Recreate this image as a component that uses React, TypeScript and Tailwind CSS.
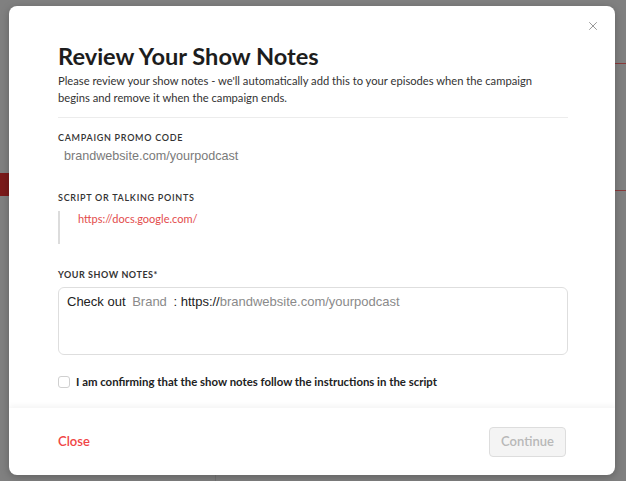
import { X } from "lucide-react";

export default function App() {
  return (
    <div className="relative flex h-[481px] w-[626px] items-start overflow-hidden bg-[#808080] pl-[9px] pt-[6px] font-['Lato',sans-serif]">
      {/* page behind the overlay */}
      <div className="absolute left-0 top-[173px] h-[23px] w-[9px] bg-[#7b1a1a]" />
      <div className="absolute right-0 top-[63px] h-px w-[11px] bg-[#8a3a3a]" />
      <div className="absolute right-0 top-[190px] h-px w-[11px] bg-[#8a3a3a]" />
      <div className="absolute bottom-0 left-[215px] h-[6px] w-px bg-[#747474]" />

      {/* Modal */}
      <div className="relative flex h-[469px] w-[606px] flex-col overflow-hidden rounded-lg bg-white shadow-[0_2px_8px_rgba(0,0,0,0.25)]">
        <button className="absolute right-[15px] top-[13px] text-[#8a8a8a]">
          <X className="h-[14px] w-[14px]" strokeWidth={1.5} />
        </button>

        <div className="flex-1 px-[49px] pt-[35px]">
          <h1 className="text-[23.6px] font-bold leading-[30px] text-[#1d1d1d]">
            Review Your Show Notes
          </h1>
          <p className="mt-[1px] text-[11.2px] leading-[17px] text-[#333]">
            Please review your show notes - we'll automatically add this to your episodes when the campaign
            begins and remove it when the campaign ends.
          </p>
          <div className="mr-[-2px] mt-[11px] h-px bg-[#ececec]" />

          <div className="mt-[14px] text-[9px] font-semibold uppercase leading-[12px] tracking-[0.08em] text-[#333]">
            Campaign Promo Code
          </div>
          <div className="mt-[4px] pl-[6px] font-['Liberation_Sans',sans-serif] text-[12.6px] leading-[16px] text-[#7a7a7a]">
            brandwebsite.com/yourpodcast
          </div>

          <div className="mt-[28px] text-[9px] font-semibold uppercase leading-[12px] tracking-[0.08em] text-[#333]">
            Script or Talking Points
          </div>
          <div className="mt-[7px] h-[33px] border-l-2 border-[#dcdcdc] pl-[18px] pt-[1px] text-[11px] leading-[14px] text-[#e34b4b]">
            https://docs.google.com/
          </div>

          <div className="mt-[25px] text-[9px] font-bold uppercase leading-[12px] tracking-[0.06em] text-[#333]">
            Your Show Notes*
          </div>
          <div className="mt-[6px] h-[68px] w-[510px] rounded-md border border-[#dedede] px-[8px] pt-[6px] font-['Liberation_Sans',sans-serif] text-[13px] leading-[16px] text-[#222]">
            Check out <span className="mx-[3px] text-[#8a8a8a]">Brand</span> : https://
            <span className="text-[#8a8a8a]">brandwebsite.com/yourpodcast</span>
          </div>

          <label className="mt-[20px] flex items-center gap-[6px]">
            <span className="h-[12px] w-[12px] rounded-[3px] border border-[#d0d0d0] bg-white" />
            <span className="text-[11.4px] font-bold leading-[14px] text-[#222]">
              I am confirming that the show notes follow the instructions in the script
            </span>
          </label>
        </div>

        <div className="flex h-[67px] items-center justify-between px-[49px] shadow-[0_-2px_6px_rgba(0,0,0,0.05)]">
          <span className="text-[13px] font-semibold text-[#f04545]">Close</span>
          <button className="h-[30px] w-[77px] rounded-[4px] border border-[#dddddd] bg-[#f4f4f4] text-[13px] font-semibold text-[#b8b8b8]">
            Continue
          </button>
        </div>
      </div>
    </div>
  );
}
